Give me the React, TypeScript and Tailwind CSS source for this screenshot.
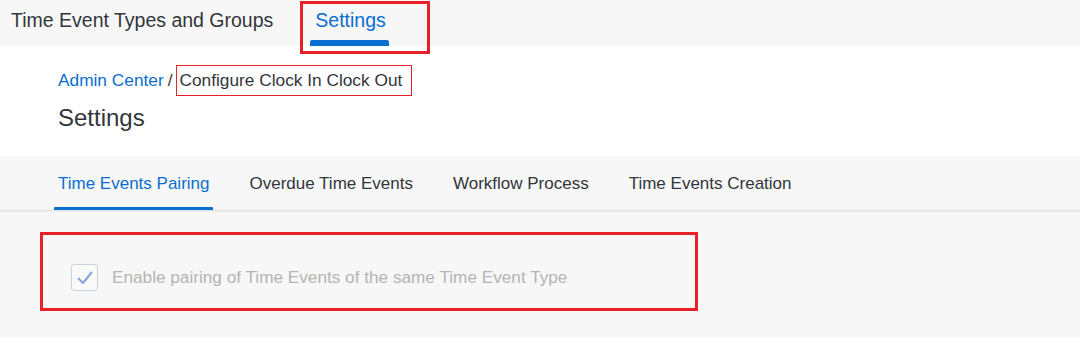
import React from 'react'

const font = { fontFamily: '"Liberation Sans", Arial, sans-serif' }

const tabs = ['Time Events Pairing', 'Overdue Time Events', 'Workflow Process', 'Time Events Creation']

export default function App() {
  return (
    <div className="w-[1080px] h-[337px] bg-[#f7f7f7] overflow-hidden" style={font}>
      {/* Top navigation */}
      <div className="h-[46px] bg-[#f7f7f7] flex items-stretch">
        <div className="pl-[11px] pt-[8px] text-[19.5px] leading-[24px] text-[#32363a]">
          Time Event Types and Groups
        </div>
        <div className="relative ml-[37px] pl-[5px] pr-[3px] pt-[8px] text-[19.5px] leading-[24px] text-[#0a6ed1]">
          Settings
          <span className="absolute left-0 right-0 bottom-0 h-[6px] rounded-t-[2px] bg-[#0a6ed1]" />
          <span className="absolute -left-[10px] -right-[41px] top-[1px] -bottom-[8px] border-[3px] border-[#e8202a]" />
        </div>
      </div>

      {/* Header */}
      <div className="h-[110px] bg-white pl-[58px] pt-[19px]">
        <div className="flex items-center text-[17.3px] leading-[21px]">
          <span className="text-[#0a6ed1]">Admin Center</span>
          <span className="text-[#32363a] ml-[4px]">/</span>
          <span className="ml-[4px] border border-[#e8202a] pl-[2px] pr-[9px] py-[4px] text-[#32363a]">
            Configure Clock In Clock Out
          </span>
        </div>
        <div className="mt-[8px] text-[24px] leading-[28px] text-[#32363a]">Settings</div>
      </div>

      {/* Tabs */}
      <div className="h-[55px] bg-[#f7f7f7] border-b border-[#e2e2e2] shadow-[0_1px_1px_rgba(0,0,0,0.04)] flex pl-[54px] gap-[32px]">
        {tabs.map((t, i) => (
          <div
            key={t}
            className={`relative px-[4px] pt-[17px] text-[17px] leading-[21px] ${i === 0 ? 'text-[#0a6ed1]' : 'text-[#32363a]'}`}
          >
            {t}
            {i === 0 && <span className="absolute left-0 right-0 bottom-0 h-[3px] rounded-t-[1px] bg-[#0a6ed1]" />}
          </div>
        ))}
      </div>

      {/* Content */}
      <div className="pl-[40px] pt-[21px]">
        <div className="w-[658px] border-[3px] border-[#e8202a] pl-[28px] pt-[29px] pb-[17px] flex items-center">
          <div className="w-[27px] h-[27px] rounded-[3px] border border-[#cdd3da] bg-[#f9f9f9] flex items-center justify-center">
            <svg width="16" height="14" viewBox="0 0 16 14" fill="none">
              <path d="M1.5 7.5 L6 12 L14.5 1.5" stroke="#80a6d6" strokeWidth="2" strokeLinecap="round" strokeLinejoin="round" />
            </svg>
          </div>
          <span className="ml-[14px] text-[17.2px] leading-[21px] text-[#b4b4b4]">
            Enable pairing of Time Events of the same Time Event Type
          </span>
        </div>
      </div>
    </div>
  )
}
